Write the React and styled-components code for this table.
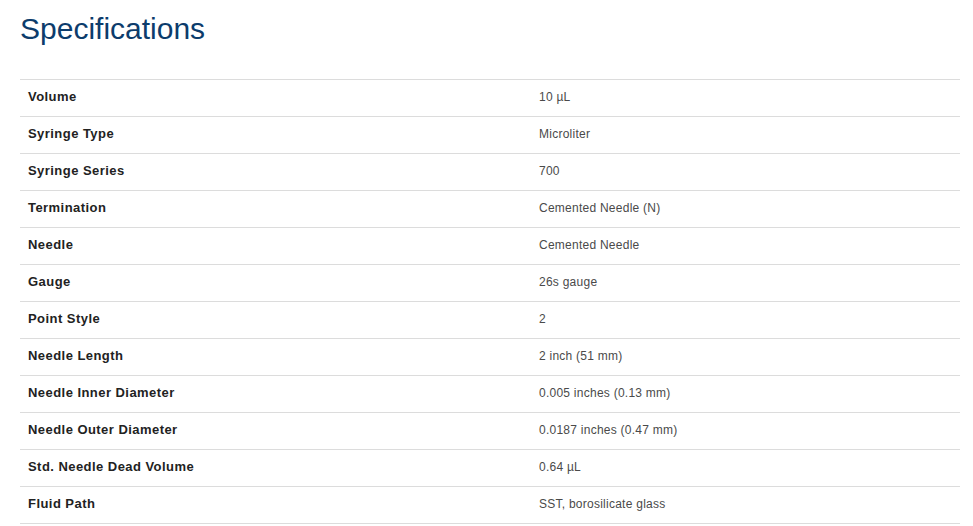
import React from 'react';
import styled, { createGlobalStyle } from 'styled-components';

const GlobalStyle = createGlobalStyle`
  html, body {
    margin: 0;
    padding: 0;
    background: #fff;
  }
  body {
    font-family: 'Liberation Sans', Arial, sans-serif;
  }
`;

const Page = styled.div`
  padding: 0 13px 0 20px;
`;

const Title = styled.h2`
  margin: 0;
  padding-top: 11px;
  font-family: 'Liberation Sans', Arial, sans-serif;
  font-weight: normal;
  font-size: 30px;
  line-height: 36px;
  color: #0c3c6c;
  margin-bottom: 32px;
`;

const SpecTable = styled.table`
  width: 940px;
  border-collapse: collapse;
  border-top: 1px solid #dcdcdc;
`;

const Row = styled.tr`
  border-bottom: 1px solid #dcdcdc;
`;

const Label = styled.td`
  width: 495px;
  padding: 7px 8px 9px;
  height: 20px;
  font-size: 13px;
  line-height: 20px;
  font-weight: bold;
  letter-spacing: 0.45px;
  color: #222;
`;

const Value = styled.td`
  padding: 7px 8px 9px;
  height: 20px;
  font-size: 12px;
  line-height: 20px;
  letter-spacing: 0.25px;
  color: #4a4a4a;
`;

const SPECS = [
  ['Volume', '10 µL'],
  ['Syringe Type', 'Microliter'],
  ['Syringe Series', '700'],
  ['Termination', 'Cemented Needle (N)'],
  ['Needle', 'Cemented Needle'],
  ['Gauge', '26s gauge'],
  ['Point Style', '2'],
  ['Needle Length', '2 inch (51 mm)'],
  ['Needle Inner Diameter', '0.005 inches (0.13 mm)'],
  ['Needle Outer Diameter', '0.0187 inches (0.47 mm)'],
  ['Std. Needle Dead Volume', '0.64 µL'],
  ['Fluid Path', 'SST, borosilicate glass'],
];

const App = () => (
  <>
    <GlobalStyle />
    <Page>
      <Title>Specifications</Title>
      <SpecTable>
        <tbody>
          {SPECS.map(([label, value]) => (
            <Row key={label}>
              <Label>{label}</Label>
              <Value>{value}</Value>
            </Row>
          ))}
        </tbody>
      </SpecTable>
    </Page>
  </>
);

export default App;
